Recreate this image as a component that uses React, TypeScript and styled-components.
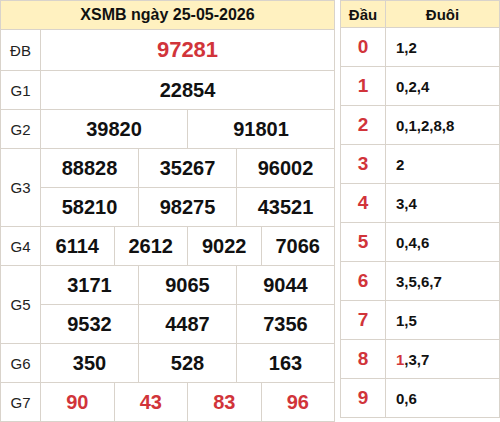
import React from "react";
import styled, { createGlobalStyle } from "styled-components";

const Global = createGlobalStyle`
  html, body { margin: 0; padding: 0; background: #fff; }
  body { font-family: "Liberation Sans", Arial, sans-serif; color: #111; }
`;

const Page = styled.div`
  display: flex;
  align-items: flex-start;
  gap: 5px;
  width: 500px;
`;

const Table = styled.table<{ $w: number }>`
  width: ${(p) => p.$w}px;
  border-collapse: collapse;
  table-layout: fixed;
  td, th { border: 1px solid #d9d3cb; padding: 0; }
`;

const HeadCell = styled.th<{ $h: number; $size: number }>`
  background: #fff1c0;
  height: ${(p) => p.$h}px;
  font-size: ${(p) => p.$size}px;
  font-weight: bold;
  text-align: center;
  color: #111;
`;

const Label = styled.td<{ $h?: number }>`
  height: ${(p) => p.$h ?? 38}px;
  font-size: 15px;
  text-align: center;
  color: #222;
`;

const Num = styled.td<{ $red?: boolean; $size?: number; $h?: number }>`
  height: ${(p) => p.$h ?? 38}px;
  font-size: ${(p) => p.$size ?? 20}px;
  font-weight: bold;
  text-align: center;
  color: ${(p) => (p.$red ? "#d1343a" : "#111")};
`;

const Dau = styled.td`
  height: 38px;
  font-size: 19px;
  font-weight: bold;
  text-align: center;
  color: #d1343a;
`;

const Duoi = styled.td`
  font-size: 15px;
  font-weight: bold;
  padding-left: 10px !important;
  color: #111;
`;

const Red = styled.span`
  color: #d1343a;
`;

const span = (n: number) => 12 / n;

const rows: { label: string; values: string[][]; red?: boolean }[] = [
  { label: "G1", values: [["22854"]] },
  { label: "G2", values: [["39820", "91801"]] },
  { label: "G3", values: [["88828", "35267", "96002"], ["58210", "98275", "43521"]] },
  { label: "G4", values: [["6114", "2612", "9022", "7066"]] },
  { label: "G5", values: [["3171", "9065", "9044"], ["9532", "4487", "7356"]] },
  { label: "G6", values: [["350", "528", "163"]] },
  { label: "G7", values: [["90", "43", "83", "96"]], red: true },
];

const loto: [string, React.ReactNode][] = [
  ["0", "1,2"],
  ["1", "0,2,4"],
  ["2", "0,1,2,8,8"],
  ["3", "2"],
  ["4", "3,4"],
  ["5", "0,4,6"],
  ["6", "3,5,6,7"],
  ["7", "1,5"],
  ["8", <><Red>1</Red>,3,7</>],
  ["9", "0,6"],
];

export default function App() {
  return (
    <>
      <Global />
      <Page>
        <Table $w={335}>
          <colgroup>
            <col style={{ width: 40 }} />
            {Array.from({ length: 12 }).map((_, i) => (
              <col key={i} />
            ))}
          </colgroup>
          <thead>
            <tr>
              <HeadCell colSpan={13} $h={28} $size={16}>XSMB ngày 25-05-2026</HeadCell>
            </tr>
          </thead>
          <tbody>
            <tr>
              <Label $h={40}>ĐB</Label>
              <Num colSpan={12} $red $size={22} $h={40}>97281</Num>
            </tr>
            {rows.map((r) =>
              r.values.map((line, li) => (
                <tr key={r.label + li}>
                  {li === 0 && <Label rowSpan={r.values.length}>{r.label}</Label>}
                  {line.map((v, vi) => (
                    <Num key={vi} colSpan={span(line.length)} $red={r.red}>
                      {v}
                    </Num>
                  ))}
                </tr>
              ))
            )}
          </tbody>
        </Table>
        <Table $w={160}>
          <colgroup>
            <col style={{ width: 45 }} />
            <col />
          </colgroup>
          <thead>
            <tr>
              <HeadCell $h={26} $size={15}>Đầu</HeadCell>
              <HeadCell $h={26} $size={15}>Đuôi</HeadCell>
            </tr>
          </thead>
          <tbody>
            {loto.map(([d, t]) => (
              <tr key={d}>
                <Dau>{d}</Dau>
                <Duoi>{t}</Duoi>
              </tr>
            ))}
          </tbody>
        </Table>
      </Page>
    </>
  );
}
